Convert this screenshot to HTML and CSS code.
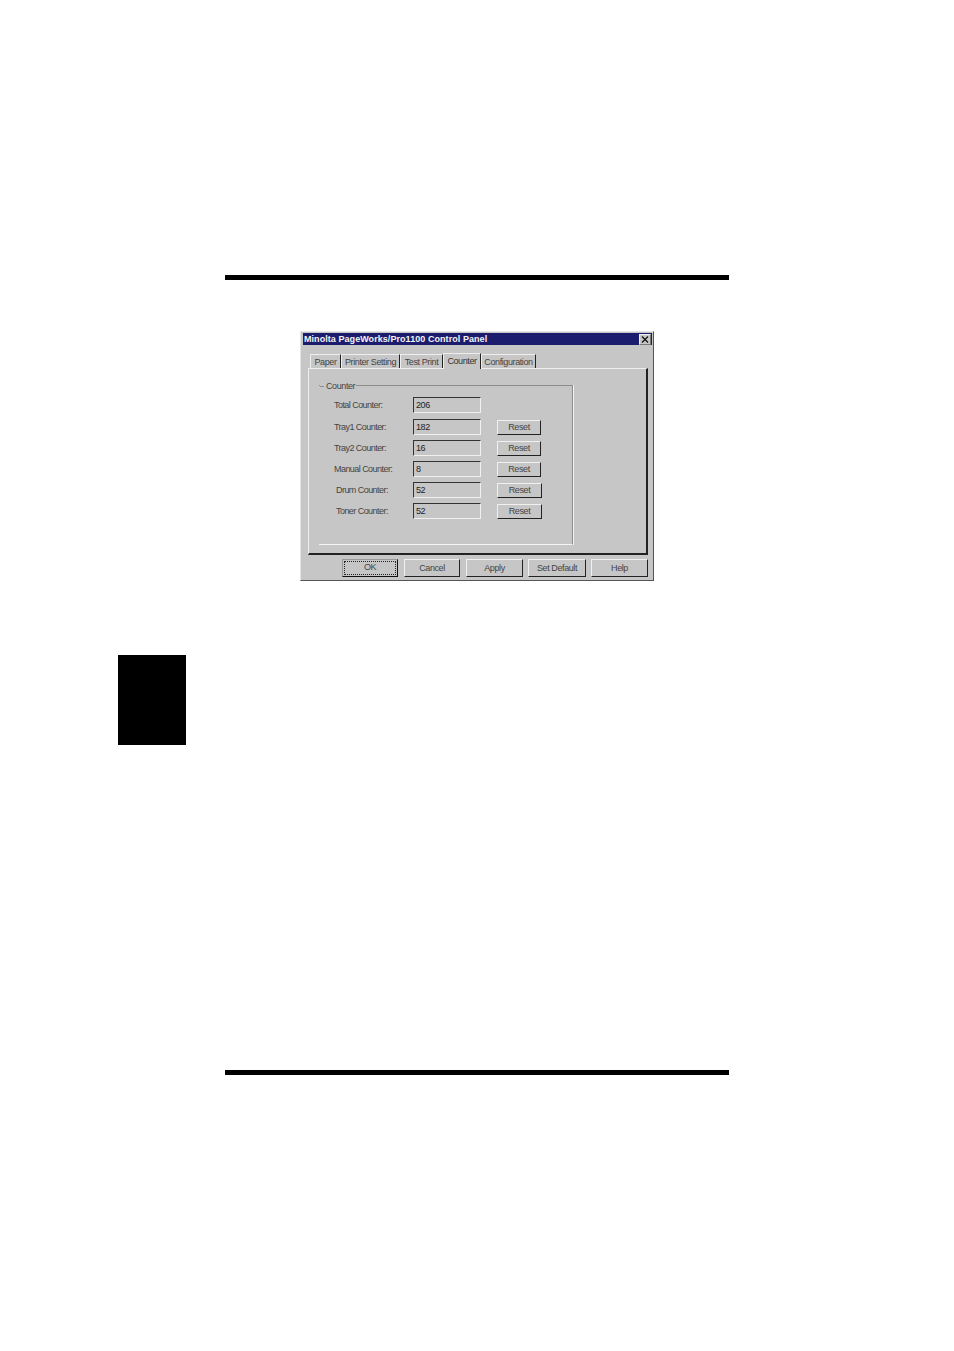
FILE: index.html
```html
<!DOCTYPE html>
<html lang="en">
<head>
  <meta charset="UTF-8">
  <meta name="viewport" content="width=device-width, initial-scale=1.0">
  <title>Control Panel</title>
  <link rel="stylesheet" href="styles.css">
</head>
<body>
  <div class="rule"></div>

  <div class="dialog">
    <div class="titlebar">
      <span>Minolta PageWorks/Pro1100 Control Panel</span>
      <span class="close">
        <svg width="8" height="7" viewBox="0 0 8 7"><path d="M1 0.5 L7 6.5 M7 0.5 L1 6.5" stroke="#111" stroke-width="1.3" fill="none"/></svg>
      </span>
    </div>

    <div class="tabs">
      <div class="tab tab-paper">Paper</div>
      <div class="tab tab-printer">Printer Setting</div>
      <div class="tab tab-test">Test Print</div>
      <div class="tab tab-counter active">Counter</div>
      <div class="tab tab-config">Configuration</div>
    </div>

    <div class="panel">
      <div class="group">
        <div class="legend">Counter</div>
        <div class="row">
          <div class="label">Total Counter:</div>
          <div class="field">206</div>
        </div>
        <div class="row">
          <div class="label">Tray1 Counter:</div>
          <div class="field">182</div>
          <div class="btn reset">Reset</div>
        </div>
        <div class="row">
          <div class="label">Tray2 Counter:</div>
          <div class="field">16</div>
          <div class="btn reset">Reset</div>
        </div>
        <div class="row">
          <div class="label">Manual Counter:</div>
          <div class="field">8</div>
          <div class="btn reset">Reset</div>
        </div>
        <div class="row">
          <div class="label shifted">Drum Counter:</div>
          <div class="field">52</div>
          <div class="btn reset wide">Reset</div>
        </div>
        <div class="row">
          <div class="label shifted">Toner Counter:</div>
          <div class="field">52</div>
          <div class="btn reset wide">Reset</div>
        </div>
      </div>
    </div>

    <div class="actions">
      <div class="btn action default"><span class="focus">OK</span></div>
      <div class="btn action">Cancel</div>
      <div class="btn action">Apply</div>
      <div class="btn action">Set Default</div>
      <div class="btn action">Help</div>
    </div>
  </div>

  <div class="side-tab"></div>

  <div class="rule rule-bottom"></div>
</body>
</html>
```

FILE: styles.css
```css
body {
  margin: 0;
  padding-top: 275px;
  background-color: #ffffff;
  font-family: "Liberation Sans", Arial, sans-serif;
  font-size: 9px;
  letter-spacing: -0.4px;
  color: #2a2a2a;
}
.rule {
  width: 504px;
  height: 5px;
  margin-left: 225px;
  background-color: #000000;
}
.rule-bottom {
  margin-top: 325px;
}
.side-tab {
  width: 68px;
  height: 90px;
  margin: 74px 0 0 118px;
  background-color: #000000;
}

/* dialog */
.dialog {
  box-sizing: border-box;
  width: 354px;
  height: 250px;
  margin: 51px 0 0 300px;
  padding: 2px 1px 0 2px;
  background-color: #c6c6c6;
  border-top: 1px solid #e4e4e4;
  border-left: 1px solid #e4e4e4;
  border-right: 1px solid #555555;
  border-bottom: 1px solid #555555;
}
.titlebar {
  display: flex;
  align-items: center;
  justify-content: space-between;
  height: 12px;
  margin-top: -1px;
  padding: 0 1px;
  background-color: #1c1c6e;
  color: #f4f4f4;
  font-weight: bold;
  letter-spacing: 0.06px;
}
.close {
  display: flex;
  align-items: center;
  justify-content: center;
  box-sizing: border-box;
  width: 12px;
  height: 11px;
  background-color: #c6c6c6;
  border: 1px solid #777777;
  border-top-color: #eeeeee;
  border-left-color: #eeeeee;
}

/* tabs */
.tabs {
  display: flex;
  align-items: flex-end;
  height: 23px;
  margin-left: 7px;
}
.tab {
  box-sizing: border-box;
  height: 14px;
  line-height: 15px;
  text-align: center;
  white-space: nowrap;
  color: #444444;
  border-top: 1px solid #eeeeee;
  border-left: 1px solid #eeeeee;
  border-right: 1px solid #222222;
}
.tab-paper { width: 31px; }
.tab-printer { width: 59px; }
.tab-test { width: 43px; }
.tab-counter { width: 38px; }
.tab-config { width: 55px; }
.tab.active {
  height: 16px;
  line-height: 14px;
  margin-bottom: -1px;
  position: relative;
  background-color: #c6c6c6;
  color: #333333;
}

/* panel */
.panel {
  box-sizing: border-box;
  width: 340px;
  height: 187px;
  margin-left: 5px;
  padding: 16px 0 0 10px;
  border-top: 1px solid #eeeeee;
  border-left: 1px solid #eeeeee;
  border-right: 2px solid #222222;
  border-bottom: 2px solid #222222;
}
.group {
  box-sizing: border-box;
  position: relative;
  width: 254px;
  height: 160px;
  padding-top: 11px;
  border-top: 1px solid #8c8c8c;
  border-right: 1px solid #8c8c8c;
  border-bottom: 1px solid #f4f4f4;
  box-shadow: 1px 0 0 #f4f4f4;
}
.legend {
  position: absolute;
  top: -5px;
  left: 1px;
  padding: 0 1px 0 6px;
  line-height: 10px;
  background-color: #c6c6c6;
  color: #444444;
}
.legend::before {
  content: "";
  position: absolute;
  top: 5px;
  left: 0;
  width: 4px;
  height: 1px;
  background-color: #8c8c8c;
}
.row {
  display: flex;
  align-items: center;
  height: 16px;
  margin-bottom: 5px;
  padding-left: 15px;
}
.legend + .row {
  margin-bottom: 6px;
}
.label {
  width: 79px;
  letter-spacing: -0.55px;
  color: #444444;
}
.label.shifted {
  padding-left: 2px;
  width: 77px;
}
.field {
  box-sizing: border-box;
  width: 68px;
  height: 16px;
  padding-left: 2px;
  line-height: 14px;
  border: 1px solid #f0f0f0;
  border-top-color: #333333;
  border-left-color: #333333;
  color: #222222;
}

/* buttons */
.btn {
  box-sizing: border-box;
  text-align: center;
  color: #444444;
  border: 1px solid #222222;
  border-top-color: #f0f0f0;
  border-left-color: #f0f0f0;
}
.reset {
  width: 44px;
  height: 15px;
  margin-left: 16px;
  line-height: 13px;
}
.reset.wide {
  width: 45px;
}
.actions {
  display: flex;
  justify-content: flex-end;
  gap: 6px;
  width: 340px;
  margin: 4px 0 0 5px;
}
.action {
  width: 56px;
  height: 18px;
  line-height: 16px;
}
.action:nth-child(3) { width: 57px; }
.action:nth-child(4) { width: 58px; margin-left: -1px; }
.action:nth-child(5) { width: 57px; margin-left: -1px; }
.default {
  border-color: #111111;
  border-top-color: #999999;
  border-left-color: #999999;
  padding: 1px;
}
.focus {
  display: block;
  box-sizing: border-box;
  height: 14px;
  line-height: 11px;
  border: 1px dotted #222222;
}
```
